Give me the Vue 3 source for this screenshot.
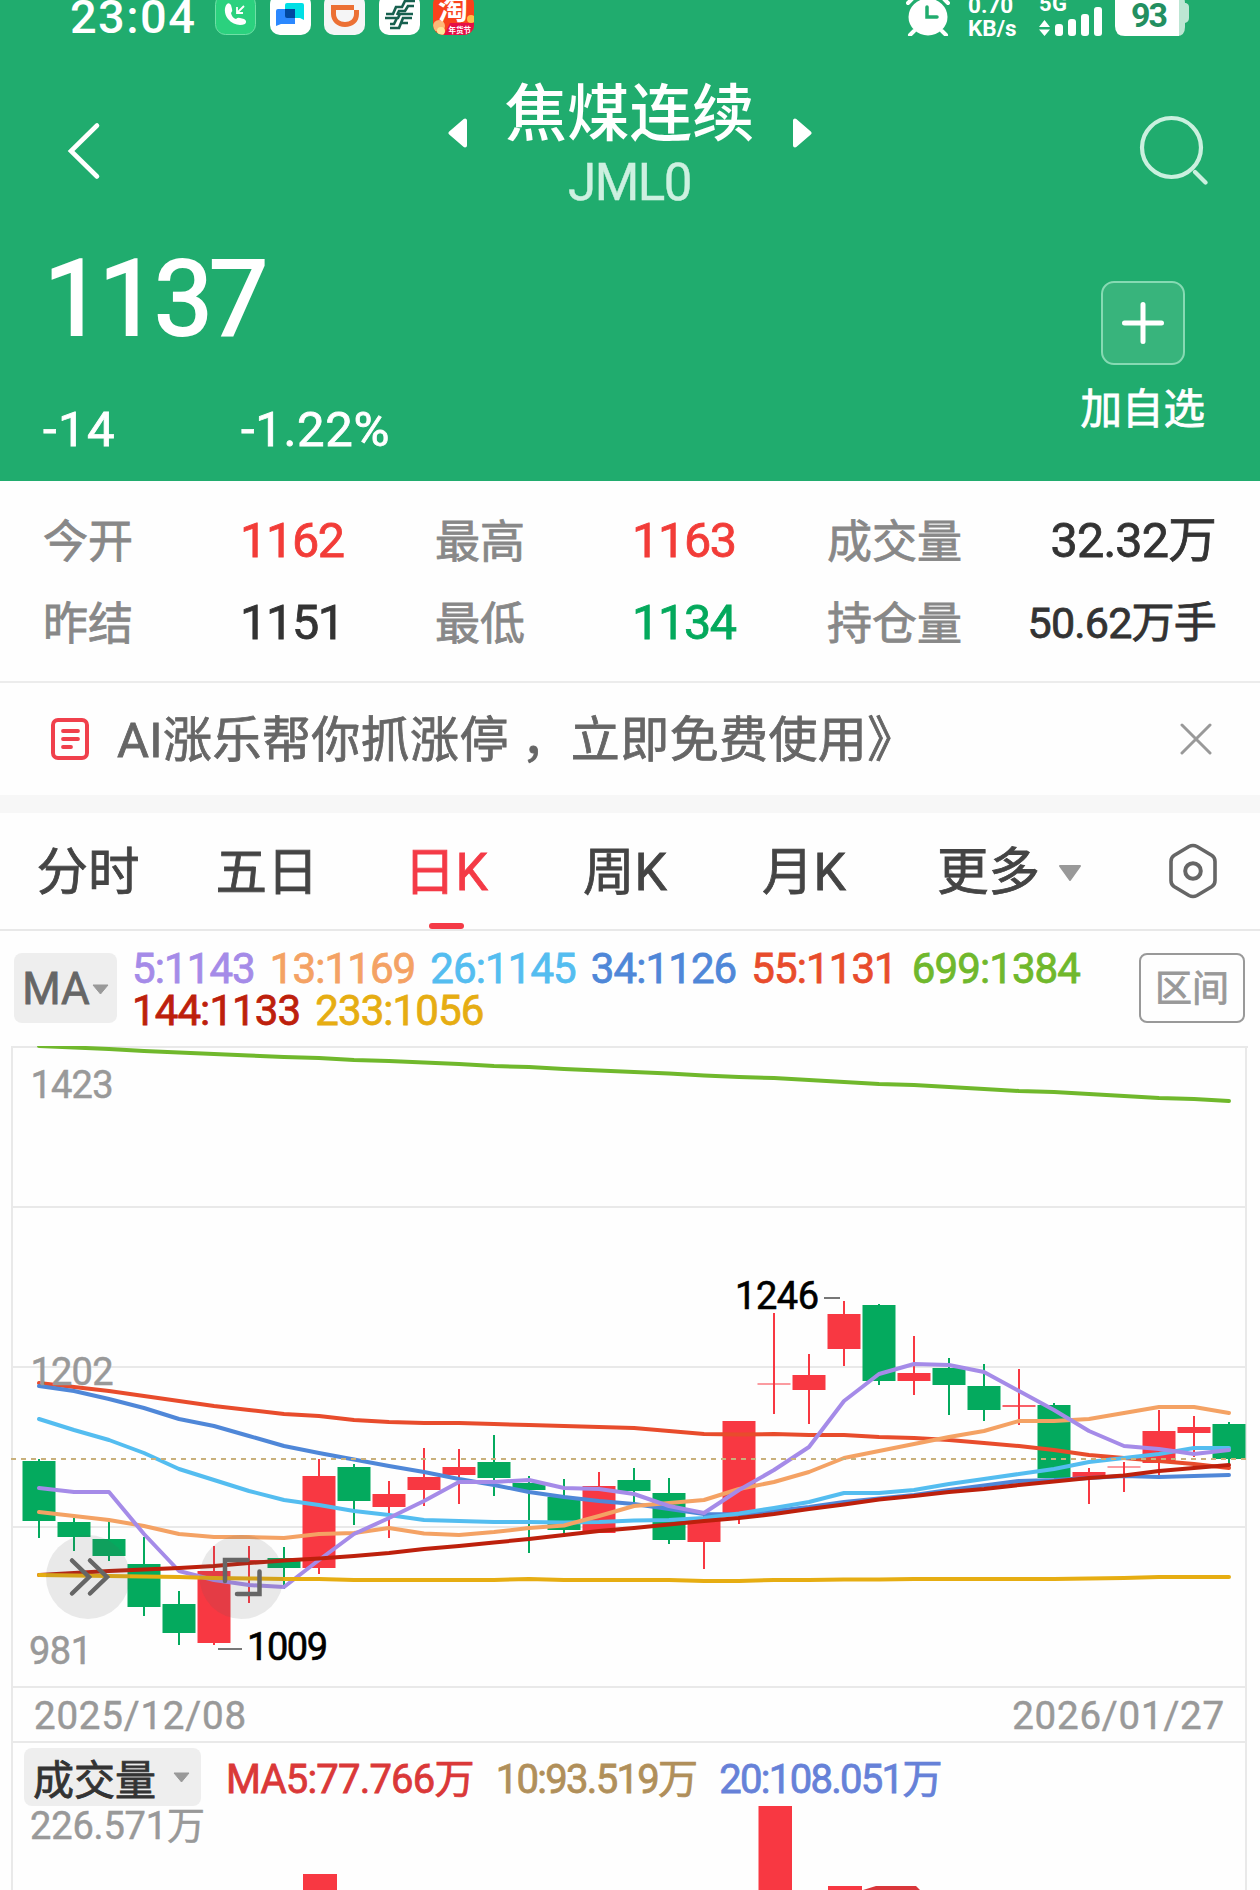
<template>
  <div class="quote-page">
    <header class="header">
      <div class="status">
        <span class="status__time">23:04</span>
        <div class="status__apps">
          <svg class="app-icon" viewBox="0 0 41 35">
            <rect x="0.5" y="-5.5" width="40" height="40" rx="10" fill="#2bd17e" stroke="#6fe0a6" />
            <path d="M12 4c-3 3-3 10 1 15 5 6 12 7 17 5 2-2 1-4-1-5l-4-1q-2-1-4 1-4-1-5-6 2-2 1-4l-1-4q-2-3-4-1z" fill="#fff" />
            <path d="M29 6l-6 6M22 7v6h6" fill="none" stroke="#fff" stroke-width="1.8" />
          </svg>
          <svg class="app-icon" viewBox="0 0 41 35">
            <rect y="-6" width="41" height="41" rx="10" fill="#fff" />
            <path d="M17 3h15q2 0 2 2v15l-4-2H17q-2 0-2-2V5q0-2 2-2z" fill="#00dfe5" />
            <path d="M8 9h17v15H11l-5 2V11q0-2 2-2z" fill="#2b88ff" />
            <path d="M15 9h10v9h-8q-2 0-2-2z" fill="#0048a0" />
          </svg>
          <svg class="app-icon" viewBox="0 0 41 35">
            <rect y="-6" width="41" height="41" rx="10" fill="#f5f5f6" />
            <path d="M7 5h23v5h5v4c0 8-6 13-14 13S7 21 7 14zM12 10v4c0 5 4 8 9 8s9-3 9-8v-4z" fill="#ec7034" fill-rule="evenodd" />
          </svg>
          <svg class="app-icon" viewBox="0 0 41 35">
            <rect y="-6" width="41" height="41" rx="10" fill="#fff" />
            <path
              d="M36 1H26l-3 6h-6l-3 7H7M35 6h-6l-3 5h-6l-2 4M34 14H21l-2 4H6M33 18h-9l-4 10h-9M29 23h-7M18 18l-3 6h-4"
              fill="none"
              stroke="#17604f"
              stroke-width="2.7"
            />
          </svg>
          <svg class="app-icon" viewBox="0 0 41 35">
            <defs>
              <clipPath id="taobao-shape"><rect y="-6" width="41" height="41" rx="10" /></clipPath>
            </defs>
            <g clip-path="url(#taobao-shape)">
              <rect y="-6" width="41" height="41" fill="#f9421c" />
              <circle cx="6" cy="26" r="6" fill="#ffb878" />
              <circle cx="8" cy="31" r="4" fill="#ffe69a" />
              <circle cx="38" cy="19" r="4" fill="#ffc04a" />
              <path d="M17 23h24v12H11z" fill="#e50f45" />
              <text x="5" y="19" font-size="30" font-weight="700" fill="#fff">淘</text>
              <text x="15.5" y="33" font-size="7.5" font-weight="700" fill="#fff">年货节</text>
            </g>
          </svg>
        </div>
        <div class="status__system">
          <svg class="alarm" viewBox="0 0 44 36">
            <ellipse cx="22" cy="17" rx="19.5" ry="18.5" fill="#fff" />
            <path d="M8 31l-4 4M36 31l4 4M2 3l5-5M42 3l-5-5" stroke="#fff" stroke-width="4" stroke-linecap="round" />
            <path d="M21 7v10h10" fill="none" stroke="#20ac6e" stroke-width="3.5" stroke-linecap="round" />
          </svg>
          <div class="speed">
            <span>0.70</span>
            <span>KB/s</span>
          </div>
          <svg class="signal" viewBox="0 0 64 36">
            <text x="0" y="11" class="signal__label" textLength="28">5G</text>
            <path d="M0 27l5.500-7 5.500 7zM0 29.500l5.500 6.500 5.500-6.500z" fill="#fff" />
            <rect x="16" y="24" width="8" height="12" rx="3" fill="#fff" />
            <rect x="29" y="19" width="8" height="17" rx="3" fill="#fff" />
            <rect x="42" y="14" width="8" height="22" rx="3" fill="#fff" />
            <rect x="55" y="7" width="8" height="29" rx="3" fill="#fff" />
          </svg>
          <svg class="battery" viewBox="0 0 76 36">
            <path d="M60-5h2q8 0 8 8h1q3 1 3 4v11q0 4-4 5v4q0 9-8 9h-2z" fill="#bce6d3" />
            <path d="M0-5h64v41H10q-10 0-10-10z" fill="#fff" />
            <text x="16" y="27" class="battery__level" textLength="37">93</text>
          </svg>
        </div>
      </div>

      <nav class="title-bar">
        <svg class="title-bar__back" viewBox="0 0 34 58">
          <path d="M30 3.500L4 29l26 25.500" fill="none" stroke="#fff" stroke-width="4.6" stroke-linecap="round" />
        </svg>
        <div class="title-bar__center">
          <svg class="title-bar__arrow" viewBox="0 0 20 30">
            <path d="M17 2.500v25L2.500 15z" fill="#fff" stroke="#fff" stroke-width="4" stroke-linejoin="round" />
          </svg>
          <div class="title-bar__names">
            <h1 class="title-bar__name">焦煤连续</h1>
            <p class="title-bar__code">JML0</p>
          </div>
          <svg class="title-bar__arrow" viewBox="0 0 20 30">
            <path d="M3 2.500v25L17.500 15z" fill="#fff" stroke="#fff" stroke-width="4" stroke-linejoin="round" />
          </svg>
        </div>
        <svg class="title-bar__search" viewBox="0 0 70 70">
          <circle cx="32.5" cy="32.5" r="29.5" fill="none" stroke="#caf0df" stroke-width="4.2" />
          <path d="M56 57l10.500 10.500" stroke="#caf0df" stroke-width="4.2" stroke-linecap="round" />
        </svg>
      </nav>

      <div class="price-row">
        <div>
          <div class="price">1137</div>
          <div class="changes">
            <span class="changes__value">-14</span>
            <span class="changes__percent">-1.22%</span>
          </div>
        </div>
        <div class="favorite">
          <button class="favorite__button">
            <svg viewBox="0 0 42 42">
              <path d="M21 2.500v37M2.500 21h37" stroke="#fff" stroke-width="5" stroke-linecap="round" />
            </svg>
          </button>
          <span class="favorite__label">加自选</span>
        </div>
      </div>
    </header>

    <section class="stats">
      <template v-for="stat in stats" :key="stat.label">
        <span class="stats__label">{{ stat.label }}</span>
        <span class="stats__value" :class="stat.type">{{ stat.value }}</span>
      </template>
    </section>

    <section class="notice">
      <svg class="notice__icon" viewBox="0 0 38 42">
        <rect x="2" y="2" width="34" height="38" rx="5" fill="none" stroke="#f0404c" stroke-width="4" />
        <path d="M12 13h15M12 21h15M12 29h8" stroke="#f0404c" stroke-width="3.8" stroke-linecap="round" />
      </svg>
      <p class="notice__text">AI涨乐帮你抓涨停 ，立即免费使用》</p>
      <svg class="notice__close" viewBox="0 0 32 32">
        <path d="M2 2l28 28M30 2L2 30" stroke="#999" stroke-width="3" stroke-linecap="round" />
      </svg>
    </section>

    <nav class="tabs">
      <button
        v-for="tab in tabs"
        :key="tab"
        class="tab"
        :class="{ 'tab--active': tab === activeTab }"
        @click="activeTab = tab"
      >{{ tab }}</button>
      <button class="tab tab--more">
        更多
        <svg class="tab__caret" viewBox="0 0 24 16">
          <path d="M2 1h20L12 15z" fill="#999" stroke="#999" stroke-width="2" stroke-linejoin="round" />
        </svg>
      </button>
      <svg class="tabs__settings" viewBox="0 0 50 56">
        <path
          d="M21 3.500q4-2 8 0l15 9q3 2 3 6v19q0 4-3 6l-15 9q-4 2-8 0l-15-9q-3-2-3-6v-19q0-4 3-6z"
          fill="none"
          stroke="#666"
          stroke-width="3.6"
        />
        <circle cx="25" cy="28" r="7.8" fill="none" stroke="#666" stroke-width="4" />
      </svg>
    </nav>

    <section class="indicator">
      <button class="indicator__type">
        MA
        <svg class="caret" viewBox="0 0 17 11"><path d="M1 1h15L8.500 10z" fill="#999" stroke="#999" stroke-linejoin="round" /></svg>
      </button>
      <div class="indicator__values">
        <span v-for="line in averages" :key="line.period" :class="`ma-${line.period}`">{{ line.period }}:{{ line.value }}</span>
      </div>
      <button class="indicator__range">区间</button>
    </section>

    <!-- Daily candles -->
    <svg class="chart" viewBox="0 1046 1260 640">
      <g class="grid">
        <path d="M11 1047H1248M12 1207H1246M12 1367H1246M12 1527H1246" />
        <path d="M12 1046V1687M1246 1046V1687" />
      </g>
      <g v-for="(candle, i) in candles" :key="i" :class="candle[0] === 'r' ? 'candle--up' : 'candle--down'">
        <rect :x="candleX(i) - 1" :y="candle[1]" width="2" :height="candle[4] - candle[1]" />
        <rect :x="candleX(i) - 16.5" :y="candle[2]" width="33" :height="candle[3] - candle[2]" :opacity="candle[5] || 1" />
      </g>
      <polyline
        v-for="line in chartLines"
        :key="line.period"
        :points="toPoints(line.points)"
        class="ma-line"
        :class="`ma-line--${line.period}`"
      />
      <path class="last-price" d="M11 1459H1246" />
      <g class="axis">
        <text x="30.5" y="1098" textLength="83">1423</text>
        <text x="30.5" y="1385" textLength="83">1202</text>
        <text x="29" y="1664" textLength="63">981</text>
      </g>
      <g class="extremes">
        <path d="M824 1298h16M218 1649h24" />
        <text x="735" y="1309" textLength="84">1246</text>
        <text x="247" y="1660" textLength="81">1009</text>
      </g>
      <g class="tools">
        <circle cx="88" cy="1577" r="42" />
        <circle cx="241.5" cy="1577" r="42" />
        <path d="M72 1560.500l17 16.500-17 16.500M90 1560.500l17 16.500-17 16.500" />
        <path d="M225 1581v-21h22.500M237 1594h22.500v-22.500" />
      </g>
    </svg>

    <div class="dates">
      <span>2025/12/08</span>
      <span>2026/01/27</span>
    </div>

    <section class="volume">
      <div class="volume__header">
        <button class="volume__type">
          成交量
          <svg class="caret" viewBox="0 0 17 11"><path d="M1 1h15L8.500 10z" fill="#999" stroke="#999" stroke-linejoin="round" /></svg>
        </button>
        <span class="volume__ma volume__ma--5">MA5:77.766万</span>
        <span class="volume__ma volume__ma--10">10:93.519万</span>
        <span class="volume__ma volume__ma--20">20:108.051万</span>
      </div>
      <svg class="volume__chart" viewBox="11 1806 1236 84">
        <text x="30" y="1839" class="volume__max" textLength="175">226.571万</text>
        <g class="candle--up">
          <rect x="303" y="1874" width="34" height="16" />
          <rect x="758.5" y="1806" width="33.5" height="84" />
          <rect x="828" y="1886" width="34" height="4" />
        </g>
        <path d="M863 1890l13-4h40l4 4z" fill="#d9363a" />
      </svg>
    </section>
  </div>
</template>

<script setup>
import { ref } from 'vue';

const activeTab = ref('日K');
const tabs = ['分时', '五日', '日K', '周K', '月K'];

const stats = [
  { label: '今开', value: '1162', type: 'is-up' },
  { label: '最高', value: '1163', type: 'is-up' },
  { label: '成交量', value: '32.32万', type: 'is-last' },
  { label: '昨结', value: '1151', type: '' },
  { label: '最低', value: '1134', type: 'is-down' },
  { label: '持仓量', value: '50.62万手', type: 'is-last is-small' },
];

const averages = [
  { period: 5, value: 1143 },
  { period: 13, value: 1169 },
  { period: 26, value: 1145 },
  { period: 34, value: 1126 },
  { period: 55, value: 1131 },
  { period: 699, value: 1384 },
  { period: 144, value: 1133 },
  { period: 233, value: 1056 },
];

// [color, high, body top, body bottom, low, body opacity]
const candles = [
  ['g', 1459, 1461, 1521, 1538],
  ['g', 1518, 1522, 1537, 1551],
  ['g', 1522, 1539, 1556, 1561],
  ['g', 1537, 1564, 1607, 1616],
  ['g', 1591, 1604, 1633, 1645],
  ['r', 1546, 1571, 1643, 1645],
  ['r', 1546, 1560, 1562, 1603],
  ['g', 1547, 1558, 1568, 1589],
  ['r', 1459, 1476, 1568, 1574],
  ['g', 1464, 1467, 1501, 1525],
  ['r', 1481, 1494, 1507, 1538],
  ['r', 1448, 1477, 1490, 1506],
  ['r', 1449, 1467, 1475, 1504],
  ['g', 1435, 1462, 1478, 1496],
  ['g', 1476, 1483, 1490, 1553],
  ['g', 1479, 1497, 1530, 1537],
  ['r', 1472, 1486, 1533, 1533],
  ['g', 1468, 1480, 1491, 1508],
  ['g', 1478, 1493, 1540, 1544],
  ['r', 1514, 1518, 1542, 1569],
  ['r', 1421, 1421, 1515, 1524],
  ['r', 1313, 1383, 1385, 1414, 0.5],
  ['r', 1354, 1375, 1390, 1424],
  ['r', 1301, 1314, 1349, 1366],
  ['g', 1304, 1305, 1381, 1385],
  ['r', 1336, 1373, 1381, 1395],
  ['g', 1358, 1368, 1385, 1415],
  ['g', 1364, 1386, 1410, 1421],
  ['r', 1369, 1405, 1407, 1425, 0.8],
  ['g', 1403, 1405, 1478, 1478],
  ['r', 1468, 1472, 1477, 1504],
  ['r', 1462, 1466, 1468, 1492, 0.5],
  ['r', 1410, 1431, 1463, 1479],
  ['r', 1416, 1427, 1433, 1457],
  ['g', 1422, 1424, 1459, 1464],
];

const chartLines = [
  {
    period: 699,
    points: [1046, 1047.5, 1049, 1051, 1052.5, 1054, 1055.5, 1057, 1058, 1060, 1061, 1062.5, 1064, 1066, 1067, 1069, 1070.5, 1072, 1073.5, 1075.5, 1077, 1078, 1080, 1082, 1084, 1085, 1087, 1089, 1091, 1092, 1094, 1096, 1098, 1099, 1101],
  },
  {
    period: 55,
    points: [1383, 1387, 1391, 1396, 1401, 1406, 1410, 1414, 1416, 1420, 1422, 1423, 1423, 1424, 1425, 1426, 1427, 1428, 1431, 1434, 1434.5, 1434, 1435, 1435, 1437, 1438, 1440, 1443, 1446, 1450, 1455, 1458, 1461, 1464, 1468],
  },
  {
    period: 34,
    points: [1386, 1391, 1399, 1408, 1419, 1426, 1436, 1446, 1453, 1459.5, 1466, 1472, 1479, 1485, 1492, 1497, 1501, 1504, 1509, 1514, 1514.5, 1511, 1507, 1502, 1498.5, 1495, 1490, 1485.5, 1481, 1480, 1478, 1476, 1477, 1476, 1475],
  },
  {
    period: 26,
    points: [1419, 1430, 1440, 1453, 1469, 1480, 1491, 1500, 1505, 1511, 1515, 1520, 1521, 1522, 1522, 1522.5, 1522, 1520.5, 1520, 1518, 1513.5, 1508, 1502, 1493, 1493, 1490, 1484, 1479, 1474, 1469, 1462, 1458, 1454, 1448, 1448],
  },
  {
    period: 13,
    points: [1512, 1516, 1520, 1526, 1534, 1537, 1537, 1538, 1534, 1533, 1528, 1533.5, 1535, 1532, 1528, 1525.5, 1516, 1506, 1503, 1500, 1489, 1482, 1472, 1458, 1451, 1444, 1437, 1431, 1421, 1421, 1419, 1413, 1407, 1407, 1413],
  },
  {
    period: 5,
    points: [1488, 1492, 1492, 1534, 1571, 1580, 1585, 1587, 1560, 1534, 1518, 1501, 1482, 1482, 1480, 1488, 1489, 1494, 1506, 1513, 1490, 1470, 1447, 1401, 1374, 1364, 1365, 1372, 1391, 1410, 1431, 1446, 1449, 1454, 1450],
  },
  {
    period: 144,
    points: [1575, 1573, 1571, 1569.5, 1568, 1566, 1563, 1560.5, 1558.5, 1556, 1553, 1549, 1546, 1542.5, 1539, 1535, 1531, 1528, 1524.5, 1521, 1518, 1514, 1509, 1504.5, 1499.5, 1496, 1492, 1489, 1485, 1481.5, 1478, 1475.5, 1471, 1468, 1465],
  },
  {
    period: 233,
    points: [1575, 1575.5, 1576, 1576.5, 1577, 1578, 1578.5, 1579, 1579, 1580, 1580, 1580, 1580, 1580, 1579, 1580, 1580, 1580, 1580, 1581, 1581, 1580, 1580, 1579.5, 1579.5, 1579, 1579, 1579, 1579, 1579, 1578.5, 1578, 1577, 1577, 1577],
  },
];

const candleX = (index) => 39 + index * 35;

const toPoints = (values) => values.map((y, i) => `${candleX(i)},${y}`).join(' ');
</script>

<style>
body {
  margin: 0;
  background: #fefefe;
}
</style>

<style scoped>
.quote-page {
  width: 1260px;
  height: 1890px;
  overflow: hidden;
  background: #fefefe;
  color: #333;
  font-family: Roboto, "Noto Sans CJK SC", sans-serif;
  -webkit-text-stroke: 0.8px;
}

svg {
  display: block;
  flex: none;
  -webkit-text-stroke: 0;
}

h1,
p {
  margin: 0;
}

button {
  padding: 0;
  border: 0;
  background: none;
  color: inherit;
  font: inherit;
  letter-spacing: inherit;
}

/* Header */
.header {
  height: 481px;
  background: #20ac6e;
  color: #fff;
}

.status {
  display: flex;
  align-items: flex-start;
  height: 76px;
  padding-left: 70px;
  overflow: hidden;
  -webkit-text-stroke: 0;
}

.status__time {
  width: 145px;
  font-size: 47px;
  line-height: 33px;
  font-weight: 500;
  letter-spacing: 1.4px;
}

.status__apps {
  display: flex;
  gap: 13.5px;
}

.app-icon {
  width: 41px;
  height: 35px;
}

.status__system {
  display: flex;
  margin-left: 432px;
}

.alarm {
  width: 44px;
  height: 36px;
}

.speed {
  display: flex;
  flex-direction: column;
  width: 71px;
  margin: -6px 0 0 18px;
  font-size: 22.5px;
  line-height: 23px;
  font-weight: 700;
}

.signal {
  width: 64px;
  height: 36px;
}

.signal__label {
  fill: #fff;
  font-size: 22px;
  font-weight: 700;
}

.battery {
  width: 76px;
  height: 36px;
  margin-left: 12px;
}

.battery__level {
  fill: #238f60;
  font-size: 34px;
  font-weight: 700;
}

.title-bar {
  display: flex;
  justify-content: space-between;
  align-items: flex-start;
  height: 138px;
  padding: 0 51px 0 67px;
}

.title-bar__back {
  width: 34px;
  height: 58px;
  margin-top: 46px;
}

.title-bar__center {
  display: flex;
  margin-left: 19px;
}

.title-bar__arrow {
  width: 20px;
  height: 30px;
  margin-top: 41.5px;
}

.title-bar__names {
  width: 324px;
  text-align: center;
}

.title-bar__name {
  padding-top: 2px;
  font-size: 62.5px;
  line-height: 74px;
  font-weight: 500;
  -webkit-text-stroke: 0;
}

.title-bar__code {
  font-size: 51px;
  line-height: 61px;
  letter-spacing: -1.5px;
  color: #cdf0e0;
  -webkit-text-stroke: 0.4px;
}

.title-bar__search {
  width: 70px;
  height: 70px;
  margin-top: 39px;
}

.price-row {
  display: flex;
  justify-content: space-between;
  padding: 31px 55px 0 43px;
}

.price {
  margin-left: 1px;
  font-size: 105px;
  line-height: 110px;
  letter-spacing: -4px;
  -webkit-text-stroke: 2.2px;
}

.changes {
  display: flex;
  margin-top: 45px;
  font-size: 49px;
  line-height: 60px;
  letter-spacing: 0.7px;
}

.changes__value {
  width: 198px;
  letter-spacing: 1.5px;
}

.favorite {
  display: flex;
  flex-direction: column;
  align-items: center;
  padding-top: 36px;
}

.favorite__button {
  display: grid;
  place-items: center;
  box-sizing: border-box;
  width: 84px;
  height: 84px;
  border: 2px solid #86dab3;
  border-radius: 13px;
  background: #38b47c;
}

.favorite__button svg {
  width: 42px;
  height: 42px;
}

.favorite__label {
  margin-top: 15px;
  font-size: 41.5px;
  line-height: 60px;
}

/* Stats */
.stats {
  display: grid;
  grid-template-columns: 197px 195px 197px 195px 150px 1fr;
  grid-template-rows: 82px 82px;
  align-items: center;
  box-sizing: border-box;
  height: 200px;
  padding: 19px 44px 0 43px;
  font-size: 48.5px;
  line-height: 82px;
}

.stats__label {
  padding-top: 3px;
  color: #888;
  font-size: 45px;
}

.stats__value {
  letter-spacing: -1.3px;
}

.stats__value.is-up {
  color: #f23c38;
}

.stats__value.is-down {
  color: #04a95c;
}

.stats__value.is-last {
  text-align: right;
  white-space: nowrap;
  letter-spacing: -0.8px;
}

.stats__value.is-small {
  font-size: 43px;
}

/* Notice */
.notice {
  display: flex;
  align-items: center;
  box-sizing: border-box;
  height: 132px;
  padding: 0 48px 0 51px;
  border-top: 2px solid #ececec;
  border-bottom: 18px solid #f7f7f7;
}

.notice__icon {
  width: 38px;
  height: 42px;
}

.notice__text {
  flex: 1;
  padding-top: 4px;
  margin-left: 28px;
  font-size: 49px;
  line-height: 70px;
  letter-spacing: 0.4px;
  color: #666;
  white-space: nowrap;
}

.notice__close {
  width: 32px;
  height: 32px;
}

/* Tabs */
.tabs {
  display: flex;
  align-items: center;
  box-sizing: border-box;
  height: 118px;
  padding: 0 42px 0 0;
  border-bottom: 2px solid #e8e8e8;
  font-size: 51.5px;
}

.tab {
  position: relative;
  width: 179px;
  height: 116px;
  padding: 4px 3px 0 0;
  color: #444;
  line-height: 112px;
  white-space: nowrap;
}

.tab--active {
  color: #f43a46;
}

.tab--active::after {
  position: absolute;
  bottom: 0;
  left: 50%;
  width: 35px;
  height: 6px;
  margin-left: -18.5px;
  border-radius: 3px;
  background: #f43a46;
  content: '';
}

.tab--more {
  display: flex;
  align-items: center;
  gap: 18px;
  width: auto;
  margin-left: 42px;
}

.tab__caret {
  width: 24px;
  height: 16px;
}

.tabs__settings {
  width: 50px;
  height: 56px;
  margin-left: auto;
}

/* Moving average legend */
.indicator {
  display: flex;
  align-items: flex-start;
  box-sizing: border-box;
  height: 115px;
  padding: 22px 14px 0;
}

.indicator__type {
  display: flex;
  align-items: center;
  justify-content: center;
  gap: 2px;
  width: 103px;
  height: 70px;
  padding-top: 2px;
  box-sizing: border-box;
  border-radius: 8px;
  background: #eee;
  color: #666;
  font-size: 44px;
}

.caret {
  width: 17px;
  height: 11px;
}

.indicator__values {
  display: flex;
  flex-wrap: wrap;
  gap: 0 15px;
  width: 990px;
  margin: -5px 0 0 15px;
  font-size: 42px;
  line-height: 42px;
  letter-spacing: -0.9px;
}

.indicator__range {
  box-sizing: border-box;
  width: 106px;
  height: 70px;
  padding-bottom: 4px;
  margin-left: 17px;
  border: 2px solid #999;
  border-radius: 8px;
  color: #999;
  font-size: 37px;
}

.ma-5 { color: #a58be8; }
.ma-13 { color: #f4a264; }
.ma-26 { color: #54bdf0; }
.ma-34 { color: #4f87d8; }
.ma-55 { color: #e84c2c; }
.ma-699 { color: #70b82c; }
.ma-144 { color: #bd200c; }
.ma-233 { color: #e6ad12; }

/* Chart */
.chart {
  width: 1260px;
  height: 640px;
}

.grid path {
  fill: none;
  stroke: #e9e9e9;
  stroke-width: 2;
}

.candle--up {
  fill: #f83842;
}

.candle--down {
  fill: #04aa5e;
}

.ma-line {
  fill: none;
  stroke-width: 4;
  stroke-linecap: round;
  stroke-linejoin: round;
}

.ma-line--5 { stroke: #a58be8; }
.ma-line--13 { stroke: #f4a264; }
.ma-line--26 { stroke: #54bdf0; }
.ma-line--34 { stroke: #4f87d8; }
.ma-line--55 { stroke: #e84c2c; }
.ma-line--699 { stroke: #70b82c; }
.ma-line--144 { stroke: #bd200c; }
.ma-line--233 { stroke: #e6ad12; }

.last-price {
  stroke: #c8b07c;
  stroke-width: 2;
  stroke-dasharray: 5 5;
}

.axis,
.volume__max {
  fill: #999;
  stroke: #999;
  stroke-width: 0.5;
  font-size: 38px;
}

.extremes {
  fill: #000;
  font-size: 38px;
}

.extremes text {
  stroke: #000;
  stroke-width: 0.6;
}

.extremes path {
  stroke: #777;
  stroke-width: 2;
}

.tools circle {
  fill: rgba(90, 90, 90, 0.13);
}

.tools path {
  fill: none;
  stroke: #666;
  stroke-width: 4.5;
  stroke-linecap: round;
}

.dates {
  display: flex;
  justify-content: space-between;
  box-sizing: border-box;
  width: 1236px;
  height: 57px;
  margin-left: 11px;
  padding: 0 20px 0 21px;
  border: 2px solid #e9e9e9;
  color: #999;
  font-size: 38.5px;
  line-height: 55px;
  letter-spacing: 0.8px;
  -webkit-text-stroke: 0.5px;
}

/* Volume */
.volume {
  box-sizing: border-box;
  width: 1236px;
  margin-left: 11px;
  border: solid #e9e9e9;
  border-width: 0 2px;
}

.volume__header {
  display: flex;
  align-items: center;
  height: 63px;
  padding: 5px 0 0 11px;
  box-sizing: border-box;
  font-size: 40px;
}

.volume__type {
  display: flex;
  align-items: center;
  justify-content: space-between;
  box-sizing: border-box;
  width: 177px;
  height: 58px;
  margin-right: 25px;
  padding: 0 11px 0 9px;
  border-radius: 8px;
  background: #eee;
  color: #333;
  font-size: 41px;
}

.volume__ma {
  margin: -2px 23px 0 0;
  letter-spacing: -1.7px;
}

.volume__ma--5 {
  margin-right: 22px;
  color: #da3838;
  letter-spacing: -0.8px;
}

.volume__ma--10 { color: #b08f5a; }
.volume__ma--20 { color: #6681d8; }

.volume__chart {
  width: 1236px;
  height: 84px;
  margin-left: -2px;
}
</style>
